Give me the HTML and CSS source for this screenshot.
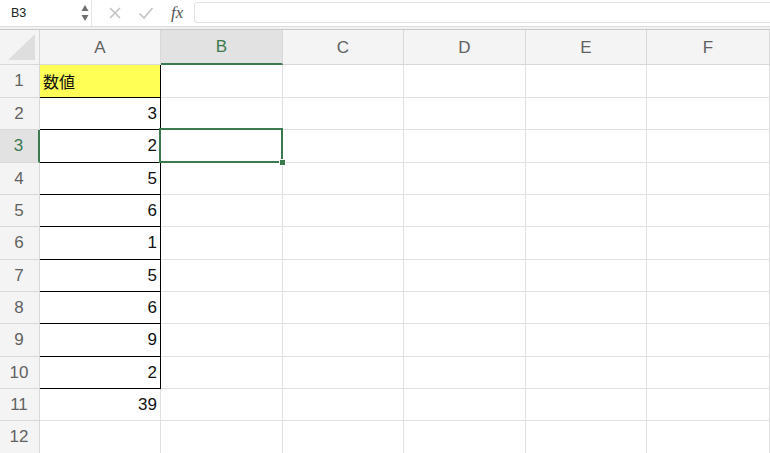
FILE: index.html
```html
<!DOCTYPE html>
<html lang="ja">
<head>
<meta charset="utf-8">
<link rel="stylesheet" href="styles.css">
</head>
<body>
<div class="toolbar">
  <div class="namebox">
    <span class="name">B3</span>
    <svg class="spin" width="8" height="18" viewBox="0 0 8 18"><path d="M4 1 L7.5 7 L0.5 7 Z" fill="#6e6e6e"/><path d="M4 17 L7.5 11 L0.5 11 Z" fill="#6e6e6e"/></svg>
  </div>
  <div class="divider"></div>
  <svg class="ico" width="14" height="14" viewBox="0 0 14 14"><path d="M2 2 L12 12 M12 2 L2 12" stroke="#c4c4c4" stroke-width="1.6" fill="none"/></svg>
  <svg class="ico check" width="16" height="14" viewBox="0 0 16 14"><path d="M1.5 7.5 L6 12 L14.5 2" stroke="#c4c4c4" stroke-width="1.6" fill="none"/></svg>
  <span class="fx">fx</span>
  <div class="input"></div>
</div>
<div class="band"></div>
<div class="sheet">
  <div class="hd corner"><div class="tri"></div></div>
  <div class="hd col">A</div>
  <div class="hd col sel">B</div>
  <div class="hd col">C</div>
  <div class="hd col">D</div>
  <div class="hd col">E</div>
  <div class="hd col">F</div>

  <div class="hd row">1</div><div class="c a yellow txt">数値</div><div class="c"></div><div class="c"></div><div class="c"></div><div class="c"></div><div class="c"></div>
  <div class="hd row">2</div><div class="c a num">3</div><div class="c"></div><div class="c"></div><div class="c"></div><div class="c"></div><div class="c"></div>
  <div class="hd row rsel">3</div><div class="c a num">2</div><div class="c"></div><div class="c"></div><div class="c"></div><div class="c"></div><div class="c"></div>
  <div class="hd row">4</div><div class="c a num">5</div><div class="c"></div><div class="c"></div><div class="c"></div><div class="c"></div><div class="c"></div>
  <div class="hd row">5</div><div class="c a num">6</div><div class="c"></div><div class="c"></div><div class="c"></div><div class="c"></div><div class="c"></div>
  <div class="hd row">6</div><div class="c a num">1</div><div class="c"></div><div class="c"></div><div class="c"></div><div class="c"></div><div class="c"></div>
  <div class="hd row">7</div><div class="c a num">5</div><div class="c"></div><div class="c"></div><div class="c"></div><div class="c"></div><div class="c"></div>
  <div class="hd row">8</div><div class="c a num">6</div><div class="c"></div><div class="c"></div><div class="c"></div><div class="c"></div><div class="c"></div>
  <div class="hd row">9</div><div class="c a num">9</div><div class="c"></div><div class="c"></div><div class="c"></div><div class="c"></div><div class="c"></div>
  <div class="hd row">10</div><div class="c a num">2</div><div class="c"></div><div class="c"></div><div class="c"></div><div class="c"></div><div class="c"></div>
  <div class="hd row">11</div><div class="c num">39</div><div class="c"></div><div class="c"></div><div class="c"></div><div class="c"></div><div class="c"></div>
  <div class="hd row">12</div><div class="c"></div><div class="c"></div><div class="c"></div><div class="c"></div><div class="c"></div><div class="c"></div>

  <div class="selection"><div class="handle"></div></div>
</div>
</body>
</html>
```

FILE: styles.css
```css
* { box-sizing: border-box; }
html, body { margin: 0; padding: 0; background: #fff; overflow: hidden; }
body {
  width: 770px;
  height: 453px;
  font-family: "Liberation Sans", "Noto Sans CJK JP", sans-serif;
  color: #000;
}
.toolbar {
  height: 27px;
  display: flex;
  align-items: center;
  border-bottom: 1px solid #dcdcdc;
  background: #fff;
}
.namebox {
  width: 91px;
  height: 26px;
  display: flex;
  align-items: center;
  justify-content: space-between;
  padding: 0 2px 0 11px;
}
.name { font-size: 12.5px; color: #222; }
.spin { display: block; }
.divider { width: 1px; height: 26px; background: #e6e6e6; }
.ico { display: block; margin-left: 16px; }
.check { margin-left: 16px; }
.fx {
  font-family: "Liberation Serif", serif;
  font-style: italic;
  font-size: 17px;
  color: #555;
  margin-left: 17px;
  margin-right: 11px;
}
.input {
  flex: 1;
  height: 21px;
  margin-top: -2px;
  border: 1px solid #e2e2e2;
  border-right: none;
  border-radius: 4px 0 0 4px;
  background: #fff;
}
.band { height: 2px; background: #f1f1f1; }
.sheet {
  position: relative;
  display: grid;
  grid-template-columns: 40px 121px 122px 121px 122px 121px 123px;
  grid-template-rows: 35px 33px 32px 33px 32px 32px 33px 32px 32px 33px 32px 32px 33px;
  border-top: 1px solid #c8c8c8;
}
.hd {
  background: #f4f4f4;
  color: #626262;
  font-size: 17px;
  display: flex;
  align-items: center;
  justify-content: center;
  border-right: 1px solid #d8d8d8;
  border-bottom: 1px solid #d8d8d8;
}
.corner { position: relative; }
.tri {
  position: absolute;
  right: 4px;
  bottom: 4px;
  width: 27px;
  height: 26px;
  background: #dedede;
  clip-path: polygon(100% 0, 100% 100%, 0 100%);
}
.col { padding-top: 1px; }
.col.sel {
  background: #e2e2e2;
  color: #3a7a4e;
  border-bottom: 2px solid #3a7a4e;
}
.row { justify-content: center; padding-right: 1px; }
.row.rsel {
  background: #e2e2e2;
  color: #3a7a4e;
  border-right: 2px solid #3a7a4e;
}
.c {
  border-right: 1px solid #e0e0e0;
  border-bottom: 1px solid #e0e0e0;
  display: flex;
  align-items: center;
  font-size: 17px;
  color: #111;
}
.c.a {
  border-right-color: #000;
  border-bottom-color: #000;
}
.yellow { background: #ffff55; }
.txt { padding-left: 3px; font-size: 16px; }
.num { justify-content: flex-end; padding-right: 3px; }
.selection {
  position: absolute;
  left: 159px;
  top: 98px;
  width: 124px;
  height: 35px;
  border: 2px solid #3a7a4e;
}
.handle {
  position: absolute;
  right: -5px;
  bottom: -5px;
  width: 7px;
  height: 7px;
  background: #3a7a4e;
  border: 1px solid #fff;
}
```
